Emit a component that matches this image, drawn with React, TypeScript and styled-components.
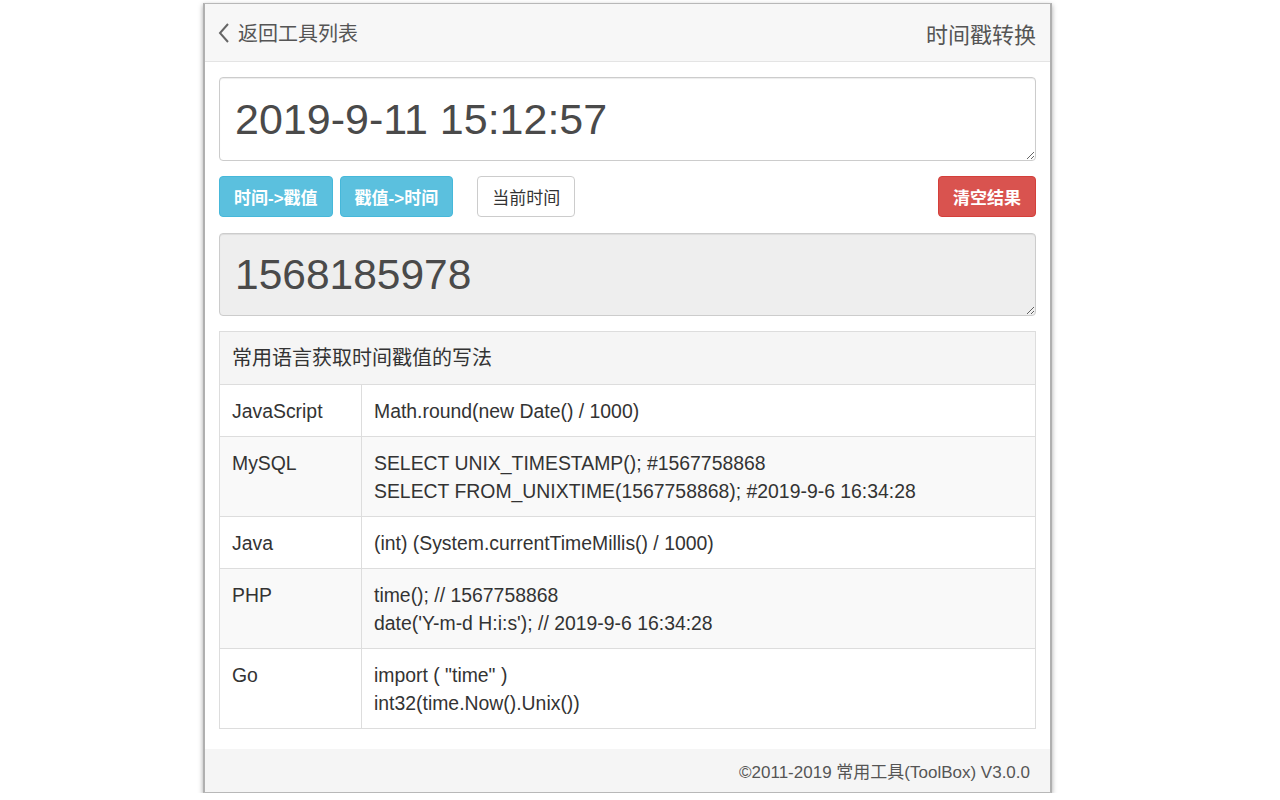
import React from 'react';
import styled, { createGlobalStyle } from 'styled-components';

const GlobalStyle = createGlobalStyle`
  html, body {
    margin: 0;
    padding: 0;
    background: #fff;
  }
  body {
    font-family: "Liberation Sans", Arial, "Noto Sans CJK SC", sans-serif;
    color: #333;
  }
`;

const Page = styled.div`
  padding: 3px 0 0 203px;
`;

const Panel = styled.div`
  width: 849px;
  height: 790px;
  box-sizing: border-box;
  background: #fff;
  border: 1px solid #b8b8b8;
  border-left: 2px solid #b0b0b0;
  border-right: 2px solid #b0b0b0;
  box-shadow: 0 2px 5px rgba(0, 0, 0, 0.35);
  display: flex;
  flex-direction: column;
`;

const Header = styled.div`
  height: 57px;
  flex-shrink: 0;
  background: #f7f7f7;
  border-bottom: 1px solid #e4e4e4;
  display: flex;
  align-items: center;
  justify-content: space-between;
  padding: 0 14px 0 13px;
`;

const BackLink = styled.a`
  display: flex;
  align-items: center;
  gap: 8px;
  font-size: 20px;
  color: #555;
  text-decoration: none;
`;

const Title = styled.div`
  font-size: 22px;
  color: #555;
`;

const Body = styled.div`
  flex: 1;
  padding: 15px 14px 0 14px;
`;

const TextBox = styled.textarea<{ $big?: number; $filled?: boolean; $padTop: number }>`
  display: block;
  width: 100%;
  height: ${p => (p.$filled ? 83 : 84)}px;
  box-sizing: border-box;
  margin: 0;
  border: 1px solid #ccc;
  border-radius: 4px;
  box-shadow: inset 0 1px 1px rgba(0, 0, 0, 0.075);
  background: ${p => (p.$filled ? '#eee' : '#fff')};
  color: #4a4a4a;
  font-family: "Liberation Sans", Arial, sans-serif;
  font-size: ${p => p.$big}px;
  line-height: 1.2;
  padding: ${p => p.$padTop}px 15px 0;
  resize: vertical;
  overflow: hidden;
  outline: none;
`;

const ButtonRow = styled.div`
  display: flex;
  align-items: center;
  margin: 15px 0 16px;
`;

const Btn = styled.button<{ $kind: 'info' | 'default' | 'danger'; $gap?: number }>`
  height: 41px;
  box-sizing: border-box;
  padding: 0 14px;
  margin-left: ${p => p.$gap ?? 0}px;
  border-radius: 4px;
  font-family: "Liberation Sans", Arial, "Noto Sans CJK SC", sans-serif;
  font-size: 17px;
  font-weight: ${p => (p.$kind === 'default' ? 400 : 700)};
  cursor: pointer;
  color: ${p => (p.$kind === 'default' ? '#333' : '#fff')};
  background: ${p =>
    p.$kind === 'info' ? '#5bc0de' : p.$kind === 'danger' ? '#d9534f' : '#fff'};
  border: 1px solid
    ${p => (p.$kind === 'info' ? '#46b8da' : p.$kind === 'danger' ? '#d43f3a' : '#ccc')};
`;

const Spacer = styled.div`
  flex: 1;
`;

const Table = styled.table`
  width: 100%;
  margin-top: 15px;
  border-collapse: collapse;
  border: 1px solid #ddd;
  font-size: 19.4px;
  color: #333;
`;

const HeadCell = styled.th`
  text-align: left;
  font-weight: 400;
  font-size: 20px;
  background: #f5f5f5;
  border: 1px solid #ddd;
  padding: 12px 12px;
  line-height: 28px;
`;

const Row = styled.tr<{ $striped: boolean }>`
  background: ${p => (p.$striped ? '#f9f9f9' : '#fff')};
`;

const Cell = styled.td<{ $narrow?: boolean }>`
  border: 1px solid #ddd;
  padding: 12px 12px 11px;
  line-height: 28px;
  vertical-align: top;
  width: ${p => (p.$narrow ? '117px' : 'auto')};
`;

const Footer = styled.div`
  height: 43px;
  flex-shrink: 0;
  background: #f5f5f5;
  display: flex;
  align-items: center;
  justify-content: flex-end;
  padding-right: 20px;
  font-size: 17px;
  color: #555;
`;

const rows: { lang: string; code: string[] }[] = [
  { lang: 'JavaScript', code: ['Math.round(new Date() / 1000)'] },
  {
    lang: 'MySQL',
    code: ['SELECT UNIX_TIMESTAMP(); #1567758868', 'SELECT FROM_UNIXTIME(1567758868); #2019-9-6 16:34:28'],
  },
  { lang: 'Java', code: ['(int) (System.currentTimeMillis() / 1000)'] },
  { lang: 'PHP', code: ['time(); // 1567758868', "date('Y-m-d H:i:s'); // 2019-9-6 16:34:28"] },
  { lang: 'Go', code: ['import ( "time" )', 'int32(time.Now().Unix())'] },
];

const ChevronLeft = () => (
  <svg width="12" height="22" viewBox="0 0 12 22">
    <polyline points="10,2 2,11 10,20" fill="none" stroke="#666" strokeWidth="2" />
  </svg>
);

const App: React.FC = () => (
  <Page>
    <GlobalStyle />
    <Panel>
      <Header>
        <BackLink href="#">
          <ChevronLeft />
          返回工具列表
        </BackLink>
        <Title>时间戳转换</Title>
      </Header>
      <Body>
        <TextBox $big={43} $padTop={16} defaultValue="2019-9-11 15:12:57" />
        <ButtonRow>
          <Btn $kind="info">时间-&gt;戳值</Btn>
          <Btn $kind="info" $gap={7}>戳值-&gt;时间</Btn>
          <Btn $kind="default" $gap={24}>当前时间</Btn>
          <Spacer />
          <Btn $kind="danger">清空结果</Btn>
        </ButtonRow>
        <TextBox $big={42.5} $filled $padTop={15} readOnly defaultValue="1568185978" />
        <Table>
          <thead>
            <tr>
              <HeadCell colSpan={2}>常用语言获取时间戳值的写法</HeadCell>
            </tr>
          </thead>
          <tbody>
            {rows.map((r, i) => (
              <Row key={r.lang} $striped={i % 2 === 1}>
                <Cell $narrow>{r.lang}</Cell>
                <Cell>
                  {r.code.map(line => (
                    <div key={line}>{line}</div>
                  ))}
                </Cell>
              </Row>
            ))}
          </tbody>
        </Table>
      </Body>
      <Footer>©2011-2019 常用工具(ToolBox) V3.0.0</Footer>
    </Panel>
  </Page>
);

export default App;
